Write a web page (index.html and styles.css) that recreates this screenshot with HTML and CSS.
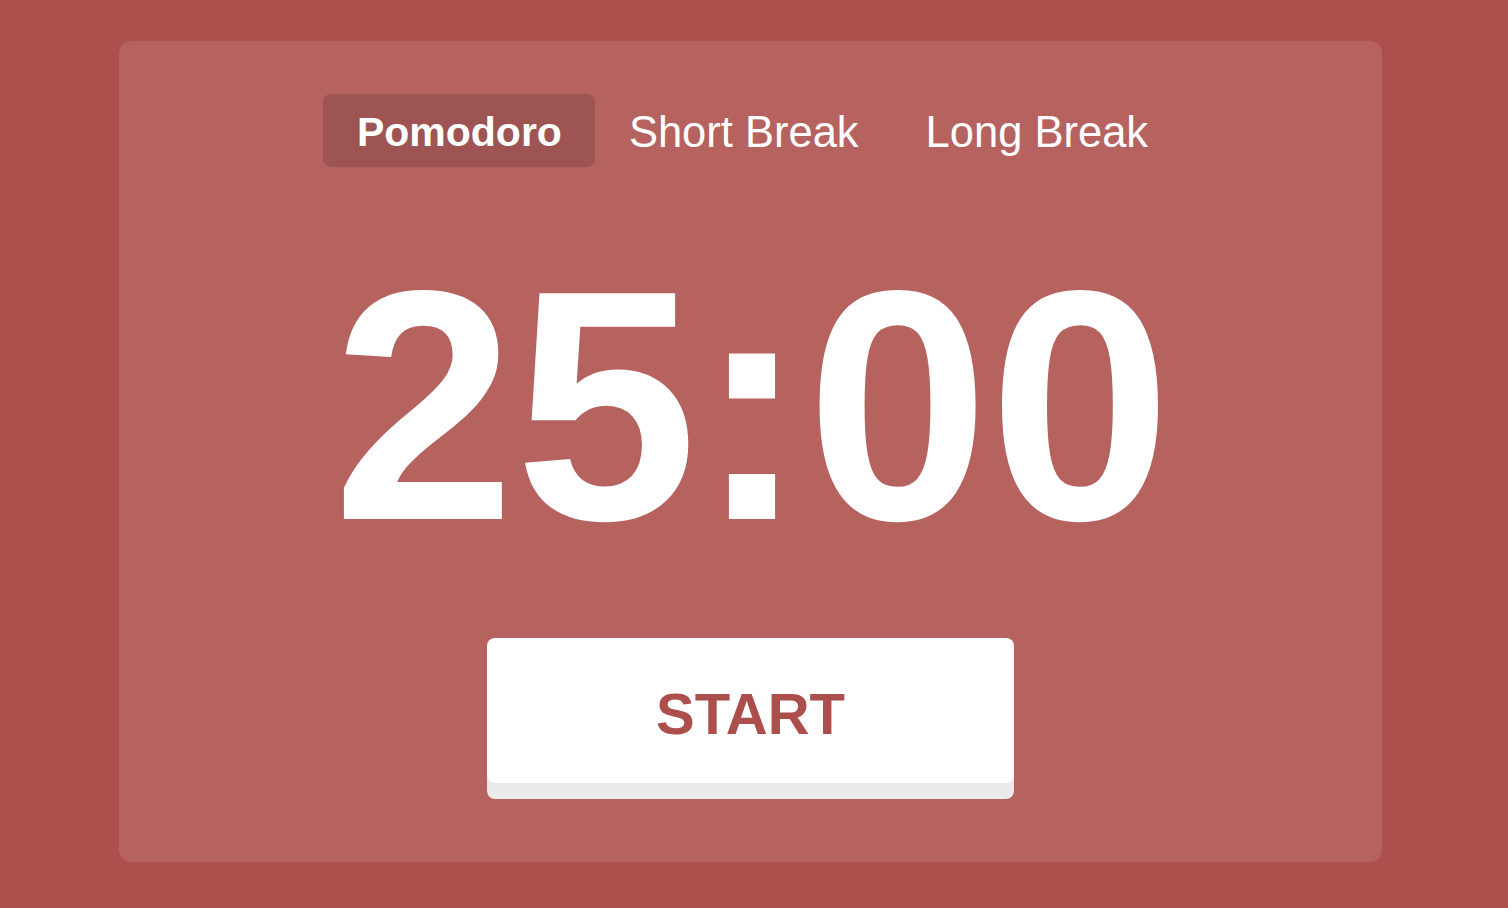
FILE: index.html
```html
<!DOCTYPE html>
<html lang="en">
<head>
<meta charset="utf-8">
<title>Pomodoro Timer</title>
<link rel="stylesheet" href="styles.css">
</head>
<body>
  <main class="card">
    <nav class="tabs">
      <button class="tab tab-active">Pomodoro</button>
      <button class="tab">Short Break</button>
      <button class="tab">Long Break</button>
    </nav>
    <div class="timer">25:00</div>
    <button class="start">START</button>
  </main>
</body>
</html>
```

FILE: styles.css
```css
html, body {
  margin: 0;
  height: 100%;
}
body {
  background: #ac4f4d;
  padding: 41px 126px 46px 119px;
  box-sizing: border-box;
  font-family: "Liberation Sans", Arial, sans-serif;
  color: #fff;
}
.card {
  height: 100%;
  box-sizing: border-box;
  background: #b6635f;
  border-radius: 12px;
  padding-top: 53px;
  display: flex;
  flex-direction: column;
  align-items: center;
}
.tabs {
  display: flex;
  height: 73px;
  margin-left: 3px;
}
.tab {
  border: none;
  background: transparent;
  color: #fff;
  font-family: inherit;
  font-size: 43.5px;
  padding: 4px 33px 0 34px;
  height: 73px;
  border-radius: 8px;
  cursor: pointer;
}
.tab-active {
  background: #9d5452;
  font-weight: bold;
  font-size: 41px;
}
.timer {
  margin-top: 88px;
  font-size: 328px;
  line-height: 302px;
  font-weight: bold;
  height: 320px;
  margin-left: 3px;
}
.start {
  margin-top: 63px;
  width: 527px;
  height: 145px;
  border: none;
  border-radius: 8px;
  background: #fff;
  box-shadow: 0 16px 0 #ebebeb;
  color: #ab4e4c;
  font-family: inherit;
  font-weight: bold;
  font-size: 58px;
  padding: 6px 0 0;
  cursor: pointer;
}
```
